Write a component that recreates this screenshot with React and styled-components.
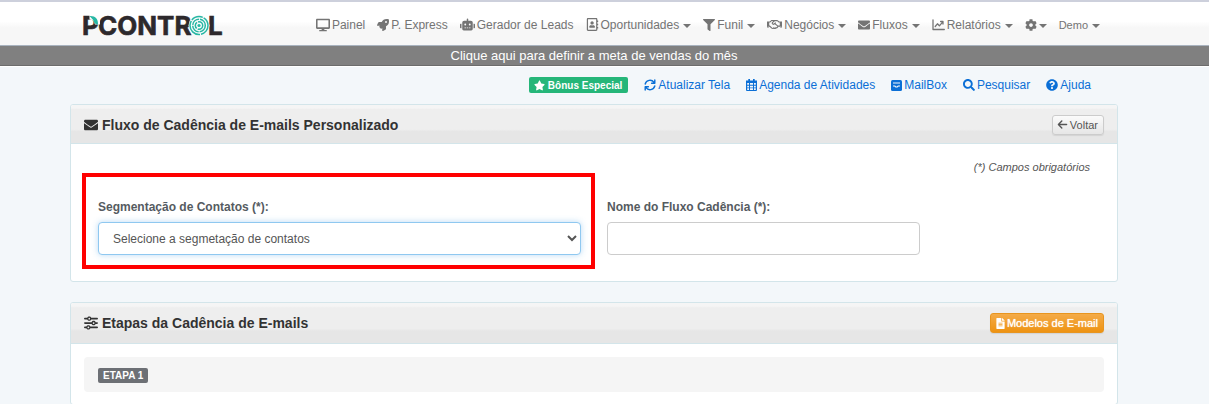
import React from "react";
import styled, { createGlobalStyle, css } from "styled-components";
import {
  FaDesktop, FaRocket, FaRobot, FaRegAddressBook, FaFilter, FaRegHandshake,
  FaEnvelope, FaCog, FaStar, FaSearch, FaQuestionCircle, FaFileAlt,
} from "react-icons/fa";
import { FaSliders, FaArrowLeft } from "react-icons/fa6";

const GlobalStyle = createGlobalStyle`
  *, *::before, *::after { box-sizing: border-box; }
  body {
    margin: 0;
    background: #f3f7fa;
    color: #555;
    font-family: "Liberation Sans", Arial, sans-serif;
    font-size: 12px;
  }
  svg { display: block; flex: none; }
`;

const Page = styled.div`
  min-height: 100vh;
`;

const Bar = styled.div`
  padding: 0 91px 0 70px;
`;

const Container = styled.div`
  max-width: 1048px;
  margin: 0 auto;
`;

const TopBar = styled(Bar).attrs({ as: "header" })`
  border-top: 2px solid #cdd0dc;
  border-bottom: 1px solid #a9b3bf;
  background: linear-gradient(#fff 45%, #f7f7f7 60%);
`;

const TopRow = styled(Container)`
  display: flex;
  align-items: center;
  justify-content: space-between;
  height: 43px;
  padding: 0 18px 0 10px;
`;

const Logo = styled.a`
  display: block;
  padding-top: 4px;
`;

const Nav = styled.nav`
  display: flex;
  align-items: center;
  gap: 12px;
  padding-top: 2px;
`;

const NavLink = styled.a`
  display: flex;
  align-items: center;
  gap: 2px;
  color: #747474;
  font-size: ${(p) => (p.$small ? 11 : 12)}px;
  line-height: 16px;
  text-decoration: none;
  white-space: nowrap;
`;

const Caret = styled.span`
  margin-left: ${(p) => (p.$tight ? 0 : 2)}px;
  margin-top: 2px;
  border: 4px solid transparent;
  border-top-color: currentColor;
  border-bottom: 0;
`;

const Goal = styled.a`
  display: block;
  padding: 0 21px 0 0;
  border-bottom: 1px solid #6c6c6c;
  background: #808080;
  box-shadow: 0 1px 0 #fff;
  color: #fff;
  font-size: 13px;
  line-height: 19px;
  text-align: center;
  text-decoration: none;
`;

const Actions = styled(Container)`
  display: flex;
  align-items: center;
  justify-content: flex-end;
  gap: 16px;
  height: 38px;
  padding-right: 27px;
`;

const ActionLink = styled.a`
  display: flex;
  align-items: center;
  gap: 2px;
  color: #0b6fd6;
  font-size: 12px;
  text-decoration: none;
  white-space: nowrap;
`;

const Bonus = styled(ActionLink)`
  height: 16px;
  padding: 0 6px 0 5px;
  gap: 3px;
  border-radius: 2px;
  background: #25b679;
  color: #fff;
  font-size: 10px;
  font-weight: bold;
`;

const Panel = styled(Container).attrs({ as: "section" })`
  margin-bottom: 20px;
  border: 1px solid #d3e5ea;
  border-radius: 3px;
  background: #fff;

  &:last-child {
    margin-bottom: 0;
  }
`;

const PanelHead = styled.div`
  display: flex;
  align-items: center;
  justify-content: space-between;
  height: ${(p) => (p.$tall ? 41 : 39)}px;
  padding: ${(p) => (p.$tall ? 0 : 1)}px 13px 0;
  border-bottom: 1px solid #d3e5ea;
  border-radius: 2px 2px 0 0;
  background: linear-gradient(#f5f5f5 8%, #eee 12%, #eee 64%, #e6e6e6 70%);
`;

const Title = styled.h2`
  display: flex;
  align-items: center;
  gap: 4px;
  margin: 0;
  color: #333;
  font-size: 14px;
  font-weight: bold;
`;

const Button = styled.button`
  display: flex;
  align-items: center;
  gap: 2px;
  height: 20px;
  padding: 0 5px 0 4px;
  border: 1px solid #ccc;
  border-radius: 3px;
  background: linear-gradient(#fbfbfb, #e6e6e6);
  box-shadow: 0 1px 1px rgba(0, 0, 0, 0.08);
  color: #555;
  font-family: inherit;
  font-size: 11px;
  white-space: nowrap;
  ${(p) =>
    p.$orange &&
    css`
      gap: 1px;
      border-color: #e8951f;
      background: linear-gradient(#f4ab48, #ee9312);
      color: #fff;
      text-shadow: 0 0 1px #fff;
    `}
`;

const Form = styled.form`
  padding: 17px 27px 12px 11px;
`;

const Required = styled.p`
  margin: 0;
  font-size: 11px;
  font-style: italic;
  line-height: 12px;
  text-align: right;
`;

const Fields = styled.div`
  display: grid;
  grid-template-columns: 513fr 313fr 158fr;
  gap: 12px;
`;

const Field = styled.div`
  display: flex;
  flex-direction: column;
  gap: 6px;
  padding-top: 25px;
  ${(p) =>
    p.$highlight &&
    css`
      padding: 21px 10px 10px 12px;
      border: 4px solid #f00;
    `}
`;

const Label = styled.label`
  color: #555b61;
  font-size: 12px;
  font-weight: bold;
  line-height: 18px;
`;

const control = css`
  width: 100%;
  height: 33px;
  border: 1px solid #ccc;
  border-radius: 4px;
  background: #fff;
  color: #555;
  font-family: inherit;
  font-size: 12px;
`;

const Select = styled.select`
  ${control}
  padding: 0 0 0 10px;
  border-color: #8fc8f0;
  box-shadow: 0 0 6px rgba(102, 175, 233, 0.45);
  outline: none;
`;

const Input = styled.input`
  ${control}
  padding: 0 12px;
`;

const Steps = styled.div`
  padding: 13px 13px 12px;
`;

const Step = styled.div`
  display: flex;
  align-items: center;
  height: 35px;
  padding: 2px 14px 0;
  border-radius: 4px;
  background: #f5f5f5;
`;

const Tag = styled.span`
  padding: 0 5px;
  border-radius: 2px;
  background: #6d7075;
  color: #fff;
  font-size: 10px;
  font-weight: bold;
  line-height: 15px;
`;

const LogoMark = () => (
  <svg width="146" height="34" viewBox="-2 -6 146 34" role="img" aria-label="PControl">
    <g fill="#2d292c" stroke="#2d292c" strokeWidth="0.6" fontFamily="Inter, sans-serif" fontSize="26" fontWeight="700">
      <text x="0" y="20">P</text>
      <text x="16" y="20">CONTR</text>
      <text x="126" y="20">L</text>
    </g>
    <path d="M7.500 0H18V9.500H13C12 6.500 11.500 5 7.500 4.500Z" fill="#fdfdfd" />
    <path d="M7.500 1C13 0.500 16.500 4 16 9.500C13.500 9.500 12 8 11.500 6C11 4 9.500 3.500 7.500 1Z" fill="#27b7a4" />
    <circle cx="117" cy="10.500" r="10.500" fill="#fbfbfb" />
    <g fill="none" stroke="#27b7a4" strokeWidth="1.500">
      <circle cx="117" cy="10.500" r="9" strokeDasharray="12 1 20 1" />
      <circle cx="117" cy="10.500" r="6.300" strokeDasharray="9 1" />
      <circle cx="117" cy="10.500" r="3.700" strokeDasharray="7 1" />
    </g>
    <circle cx="117" cy="10.500" r="1.600" fill="#27b7a4" />
  </svg>
);

const stroked = { fill: "none", stroke: "currentColor", strokeLinecap: "round", strokeLinejoin: "round" };

const ChartIcon = () => (
  <svg width="13" height="12" viewBox="0 0 13 12" {...stroked} strokeWidth="1.300">
    <path d="M1 1V10.500H12.300M3.200 7.500L5.400 4.800L7.400 6.800L10.800 2.800M8.600 2.500H11V5" />
  </svg>
);

const RefreshIcon = () => (
  <svg width="12" height="12" viewBox="0 0 12 12" {...stroked} strokeWidth="1.400">
    <path d="M1.200 5A5 5 0 0 1 10 3.300M10.800 1V4.200H7.600M10.800 7A5 5 0 0 1 2 8.700M1.200 11V7.800H4.400" />
  </svg>
);

const CalendarIcon = () => (
  <svg width="11" height="12" viewBox="0 0 11 12">
    <path
      fill="currentColor"
      fillRule="evenodd"
      d="M2.300 0H4V1.500H7V0H8.700V1.500H11V11A1 1 0 0 1 10 12H1A1 1 0 0 1 0 11V1.500H2.300ZM1.200 4V5.800H3V4ZM4 4V5.800H7V4ZM8 4V5.800H9.800V4ZM1.200 6.700V8.400H3V6.700ZM4 6.700V8.400H7V6.700ZM8 6.700V8.400H9.800V6.700ZM1.200 9.300V11H3V9.300ZM4 9.300V11H7V9.300ZM8 9.300V11H9.800V9.300Z"
    />
  </svg>
);

const MailboxIcon = () => (
  <svg width="11" height="11" viewBox="0 0 11 11">
    <rect width="11" height="11" rx="1.500" fill="currentColor" />
    <path d="M2 3H9M2 6H3.800L4.800 7H6.200L7.200 6H9" fill="none" stroke="#f3f7fa" strokeWidth="1.200" />
  </svg>
);

const NAV = [
  { icon: <FaDesktop size={14} />, text: "Painel" },
  { icon: <FaRocket size={12} />, text: "P. Express" },
  { icon: <FaRobot size={15} />, text: "Gerador de Leads" },
  { icon: <FaRegAddressBook size={13} />, text: "Oportunidades", menu: true },
  { icon: <FaFilter size={12} />, text: "Funil", menu: true },
  { icon: <FaRegHandshake size={15} />, text: "Negócios", menu: true },
  { icon: <FaEnvelope size={12} />, text: "Fluxos", menu: true },
  { icon: <ChartIcon />, text: "Relatórios", menu: true },
  { icon: <FaCog size={12} />, label: "Configurações", menu: true },
  { text: "Demo", menu: true, small: true },
];

export default function App() {
  return (
    <Page>
      <GlobalStyle />
      <TopBar>
        <TopRow>
          <Logo href="#"><LogoMark /></Logo>
          <Nav>
            {NAV.map((n) => (
              <NavLink key={n.text || n.label} href="#" $small={n.small} aria-label={n.label}>
                {n.icon}
                {n.text && <span>{n.text}</span>}
                {n.menu && <Caret $tight={!n.text} />}
              </NavLink>
            ))}
          </Nav>
        </TopRow>
      </TopBar>
      <Goal href="#">Clique aqui para definir a meta de vendas do mês</Goal>
      <Bar as="main">
        <Actions>
          <Bonus href="#"><FaStar size={11} />Bônus Especial</Bonus>
          <ActionLink href="#"><RefreshIcon />Atualizar Tela</ActionLink>
          <ActionLink href="#"><CalendarIcon />Agenda de Atividades</ActionLink>
          <ActionLink href="#"><MailboxIcon />MailBox</ActionLink>
          <ActionLink href="#"><FaSearch size={12} />Pesquisar</ActionLink>
          <ActionLink href="#"><FaQuestionCircle size={12} />Ajuda</ActionLink>
        </Actions>
        <Panel>
          <PanelHead>
            <Title><FaEnvelope size={14} />Fluxo de Cadência de E-mails Personalizado</Title>
            <Button type="button"><FaArrowLeft size={11} />Voltar</Button>
          </PanelHead>
          <Form>
            <Required>(*) Campos obrigatórios</Required>
            <Fields>
              <Field $highlight>
                <Label htmlFor="segment">Segmentação de Contatos (*):</Label>
                <Select id="segment">
                  <option>Selecione a segmetação de contatos</option>
                </Select>
              </Field>
              <Field>
                <Label htmlFor="flow">Nome do Fluxo Cadência (*):</Label>
                <Input id="flow" type="text" />
              </Field>
            </Fields>
          </Form>
        </Panel>
        <Panel>
          <PanelHead $tall>
            <Title><FaSliders size={14} />Etapas da Cadência de E-mails</Title>
            <Button type="button" $orange><FaFileAlt size={11} />Modelos de E-mail</Button>
          </PanelHead>
          <Steps>
            <Step><Tag>ETAPA 1</Tag></Step>
          </Steps>
        </Panel>
      </Bar>
    </Page>
  );
}
